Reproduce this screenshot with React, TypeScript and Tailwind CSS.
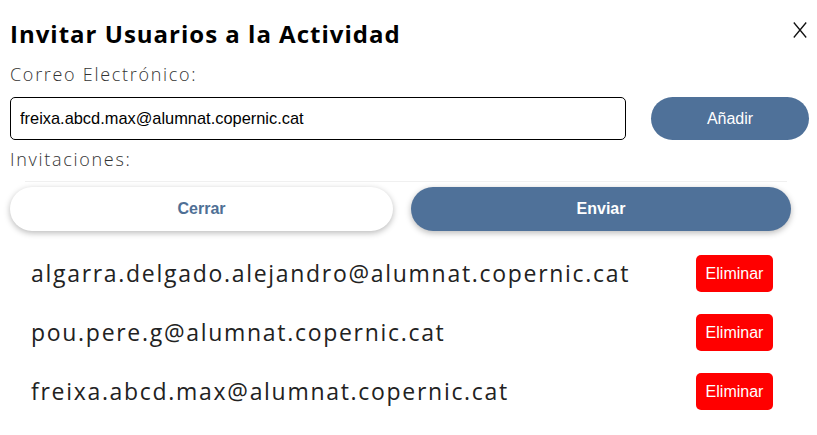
import { useState } from "react";

const emails = [
  "algarra.delgado.alejandro@alumnat.copernic.cat",
  "pou.pere.g@alumnat.copernic.cat",
  "freixa.abcd.max@alumnat.copernic.cat",
];

export default function App() {
  const [email, setEmail] = useState("freixa.abcd.max@alumnat.copernic.cat");

  return (
    <div className="w-[817px] h-[435px] bg-white relative font-['Open_Sans',sans-serif] text-[#222]">
      {/* Close */}
      <button className="absolute top-[22px] right-[10px] w-[14px] h-[16px]">
        <svg width="14" height="16" viewBox="0 0 14 16" fill="none" stroke="#111" strokeWidth="1.3">
          <path d="M0.8 0.5L13.2 15.5M13.2 0.5L0.8 15.5" />
        </svg>
      </button>

      <div className="pl-[10px] pt-[18px]">
        <h2 className="text-[24px] leading-[32px] font-bold text-black tracking-[1px]">
          Invitar Usuarios a la Actividad
        </h2>

        <p className="mt-[12px] text-[18px] leading-[24px] font-light text-[#333] tracking-[1.7px]">
          Correo Electrónico:
        </p>

        <div className="mt-[11px] flex items-center">
          <input
            value={email}
            onChange={(e) => setEmail(e.target.value)}
            className="w-[616px] h-[43px] border border-black rounded-[5px] px-[9px] text-[16.4px] font-['Liberation_Sans',sans-serif] text-black outline-none"
          />
          <button className="ml-[25px] w-[158px] h-[43px] rounded-full bg-[#4f7199] text-white text-[16px] font-['Liberation_Sans',sans-serif]">
            Añadir
          </button>
        </div>

        <p className="mt-[7px] text-[18px] leading-[24px] font-light text-[#333] tracking-[1.7px]">
          Invitaciones:
        </p>

        <div className="mt-[10px] ml-[15px] w-[762px] border-t border-[#f0f0f0]" />
        <div className="mt-[5px] flex gap-[18px] w-[781px]">
          <button className="w-[383px] h-[44px] rounded-full bg-white shadow-[0_2px_6px_rgba(0,0,0,0.28)] text-[#4f6f95] text-[16px] font-bold font-['Liberation_Sans',sans-serif]">
            Cerrar
          </button>
          <button className="w-[380px] h-[44px] rounded-full bg-[#4f7199] shadow-[0_2px_6px_rgba(0,0,0,0.28)] text-white text-[16px] font-bold font-['Liberation_Sans',sans-serif]">
            Enviar
          </button>
        </div>

        <ul className="mt-[12px] pl-[21px] w-[763px]">
          {emails.map((e) => (
            <li key={e} className="flex items-center justify-between h-[59px] pt-[2px]">
              <span className="text-[23px] text-[#222] tracking-[1.7px]">{e}</span>
              <button className="w-[77px] h-[37px] rounded-[5px] bg-[#ff0000] text-white text-[16px] font-['Liberation_Sans',sans-serif]">
                Eliminar
              </button>
            </li>
          ))}
        </ul>
      </div>
    </div>
  );
}
